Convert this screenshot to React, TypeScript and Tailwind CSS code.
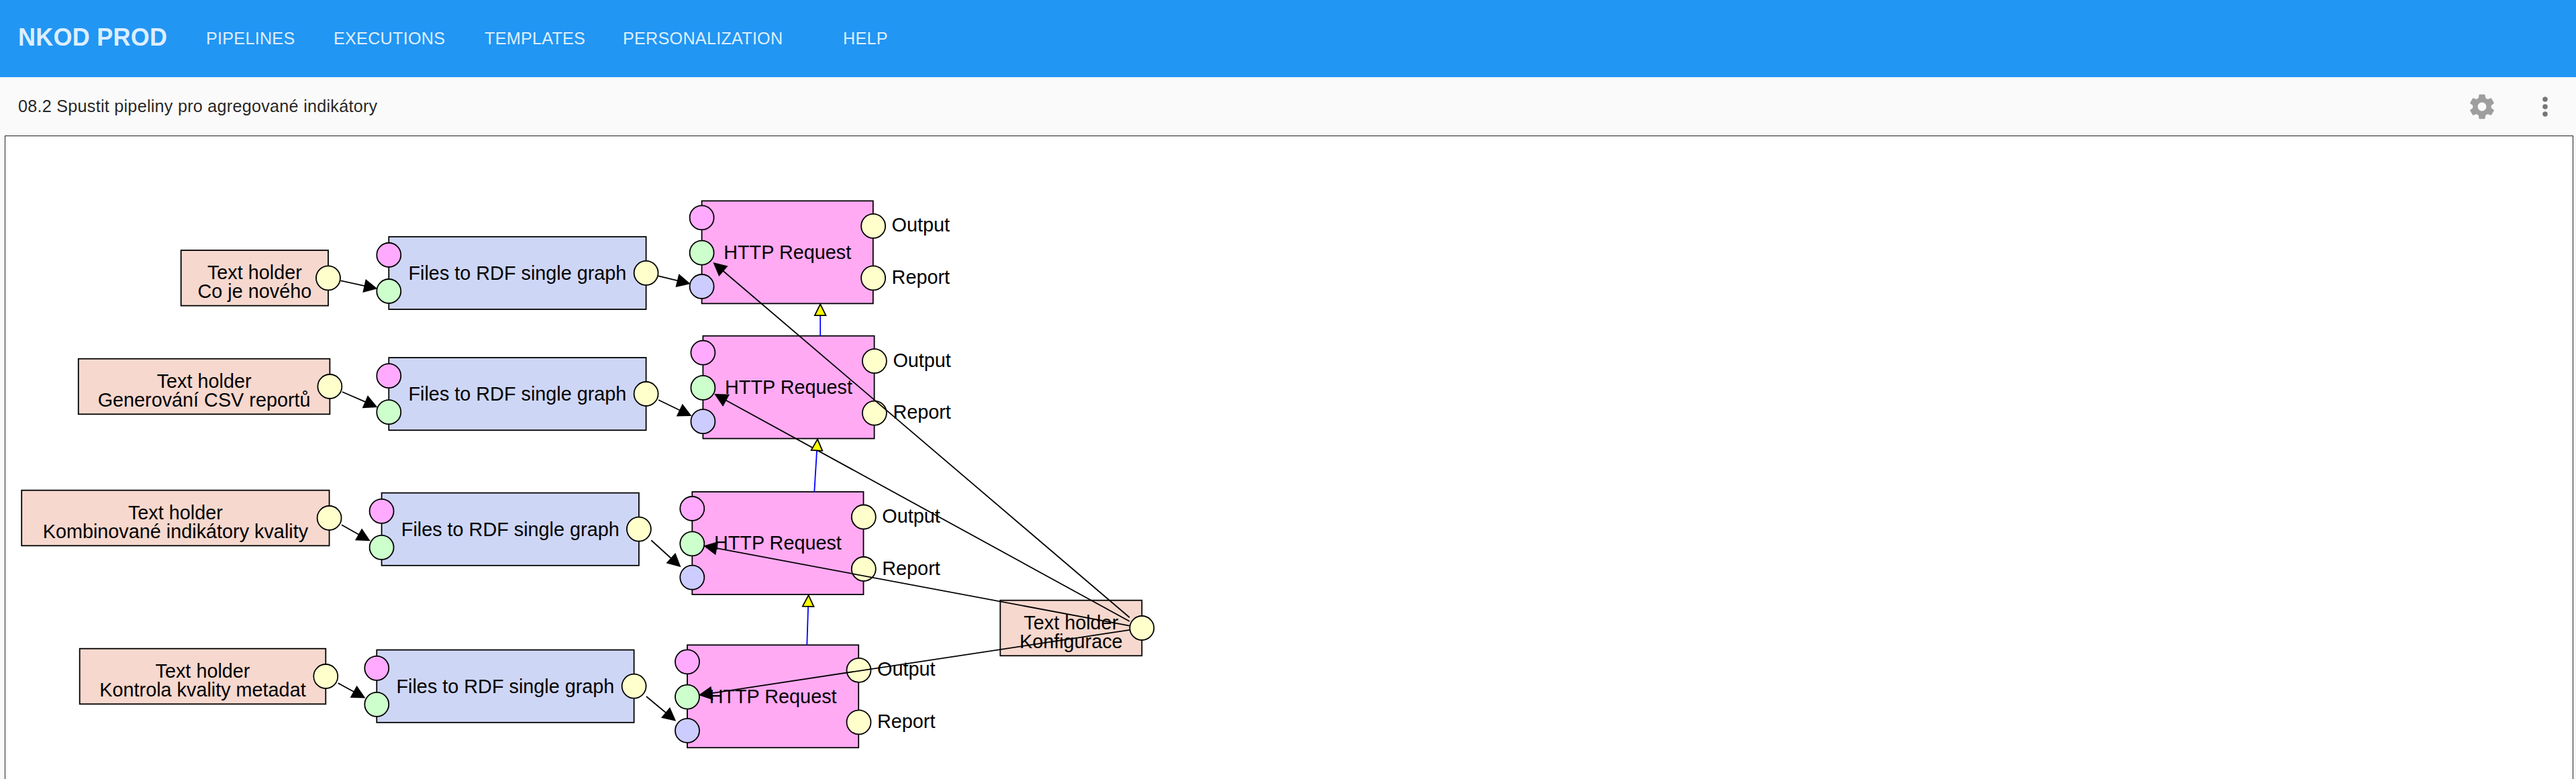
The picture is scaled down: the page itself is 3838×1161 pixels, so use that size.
type Point = { x: number; y: number };

const TEXT_HOLDERS = [
  { x: 269.7, y: 373, w: 219.3, label: "Co je nového" },
  { x: 116.8, y: 534.7, w: 374.6, label: "Generování CSV reportů" },
  { x: 32.2, y: 730.7, w: 458.4, label: "Kombinované indikátory kvality" },
  { x: 118.7, y: 966.7, w: 366.6, label: "Kontrola kvality metadat" },
  { x: 1490.3, y: 894.7, w: 211, label: "Konfigurace" },
];

const FILES_TO_RDF = [
  { x: 579.3, y: 352.8 },
  { x: 579.3, y: 533 },
  { x: 568.6, y: 734.6 },
  { x: 561.3, y: 968.6 },
];

const HTTP_REQUESTS = [
  { x: 1045.6, y: 299.4 },
  { x: 1047.4, y: 500.6 },
  { x: 1031.3, y: 733 },
  { x: 1024, y: 961.3 },
];

const FILES_WIDTH = 383.3;
const HTTP_WIDTH = 255.2;
const STROKE = 1.8;

const holderOut = (i: number): Point => ({
  x: TEXT_HOLDERS[i].x + TEXT_HOLDERS[i].w,
  y: TEXT_HOLDERS[i].y + 41.3,
});
const filesIn = (i: number): Point => ({ x: FILES_TO_RDF[i].x, y: FILES_TO_RDF[i].y + 81.2 });
const filesOut = (i: number): Point => ({ x: FILES_TO_RDF[i].x + FILES_WIDTH, y: FILES_TO_RDF[i].y + 54 });
const httpIn = (i: number, dy: number): Point => ({ x: HTTP_REQUESTS[i].x, y: HTTP_REQUESTS[i].y + dy });

const ROWS = [0, 1, 2, 3];

const DATA_LINKS: [Point, Point][] = [
  ...ROWS.map((i): [Point, Point] => [holderOut(i), filesIn(i)]),
  ...ROWS.map((i): [Point, Point] => [filesOut(i), httpIn(i, 127.6)]),
  ...ROWS.map((i): [Point, Point] => [holderOut(4), httpIn(i, 77.3)]),
];

const RUN_AFTER_LINKS: [Point, Point][] = [
  [{ x: 1222.2, y: 500.6 }, { x: 1222.2, y: 452.4 }],
  [{ x: 1213.3, y: 733 }, { x: 1218.1, y: 653.6 }],
  [{ x: 1202.3, y: 961.3 }, { x: 1204.7, y: 886 }],
];

// Triangle whose tip is at `tip` and which points along the unit vector (ux, uy).
function triangle(tip: Point, ux: number, uy: number, length: number, half: number) {
  const bx = tip.x - ux * length;
  const by = tip.y - uy * length;
  return `${tip.x},${tip.y} ${bx - uy * half},${by + ux * half} ${bx + uy * half},${by - ux * half}`;
}

function Port({ x, y, fill }: Point & { fill: string }) {
  return <circle cx={x} cy={y} r={18} fill={fill} stroke="#000" strokeWidth={STROKE} />;
}

function Box({ x, y, w, h, fill }: Point & { w: number; h: number; fill: string }) {
  return <rect x={x} y={y} width={w} height={h} fill={fill} stroke="#000" strokeWidth={STROKE} />;
}

function TextHolder({ x, y, w, label }: Point & { w: number; label: string }) {
  return (
    <g>
      <Box x={x} y={y} w={w} h={82.6} fill="#f6d8ce" />
      <text x={x + w / 2} y={y + 43} textAnchor="middle">Text holder</text>
      <text x={x + w / 2} y={y + 71.2} textAnchor="middle">{label}</text>
      <Port x={x + w} y={y + 41.3} fill="#ffffcc" />
    </g>
  );
}

function FilesToRdf({ x, y }: Point) {
  return (
    <g>
      <Box x={x} y={y} w={FILES_WIDTH} h={108.2} fill="#ced6f6" />
      <text x={x + FILES_WIDTH / 2} y={y + 64} textAnchor="middle">Files to RDF single graph</text>
      <Port x={x} y={y + 27.2} fill="#ffaaff" />
      <Port x={x} y={y + 81.2} fill="#ccffcc" />
      <Port x={x + FILES_WIDTH} y={y + 54} fill="#ffffcc" />
    </g>
  );
}

function HttpRequest({ x, y }: Point) {
  const right = x + HTTP_WIDTH;
  return (
    <g>
      <Box x={x} y={y} w={HTTP_WIDTH} h={153} fill="#ffaaf3" />
      <text x={x + HTTP_WIDTH / 2} y={y + 86.4} textAnchor="middle">HTTP Request</text>
      <Port x={x} y={y + 25} fill="#ffaaff" />
      <Port x={x} y={y + 77.3} fill="#ccffcc" />
      <Port x={x} y={y + 127.6} fill="#ccccff" />
      <Port x={right + 0.3} y={y + 37.5} fill="#ffffcc" />
      <Port x={right + 0.3} y={y + 115} fill="#ffffcc" />
      <text x={right + 27.8} y={y + 45.9}>Output</text>
      <text x={right + 27.8} y={y + 123.7}>Report</text>
    </g>
  );
}

function DataLink({ from, to }: { from: Point; to: Point }) {
  const dx = to.x - from.x;
  const dy = to.y - from.y;
  const len = Math.hypot(dx, dy);
  const ux = dx / len;
  const uy = dy / len;
  // Both ends stop at the square around a port.
  const reach = Math.max(Math.abs(ux), Math.abs(uy));
  const start = { x: from.x + (ux / reach) * 18.4, y: from.y + (uy / reach) * 18.4 };
  const tip = { x: to.x - (ux / reach) * 16.8, y: to.y - (uy / reach) * 16.8 };
  return (
    <g>
      <line x1={start.x} y1={start.y} x2={tip.x - ux * 15} y2={tip.y - uy * 15} stroke="#000" strokeWidth={STROKE} />
      <polygon points={triangle(tip, ux, uy, 20.4, 10.3)} fill="#000" />
    </g>
  );
}

function RunAfterLink({ from, to }: { from: Point; to: Point }) {
  const dx = to.x - from.x;
  const dy = to.y - from.y;
  const len = Math.hypot(dx, dy);
  const ux = dx / len;
  const uy = dy / len;
  const tip = { x: to.x - ux * 1, y: to.y - uy * 1 };
  return (
    <g>
      <line x1={from.x} y1={from.y} x2={tip.x - ux * 14} y2={tip.y - uy * 14} stroke="#00f" strokeWidth={STROKE} />
      <polygon points={triangle(tip, ux, uy, 16.8, 8.3)} fill="#ff0" stroke="#000" strokeWidth={STROKE} />
    </g>
  );
}

function Header() {
  return (
    <header className="flex h-[115px] shrink-0 items-center bg-[#2196f3] pl-[27px] text-[25.2px] tracking-[0.25px] text-white/87">
      <h1 className="w-[280px] pb-[4px] text-[36px] leading-none font-bold">NKOD PROD</h1>
      <nav className="flex whitespace-nowrap">
        <a className="w-[190px]">PIPELINES</a>
        <a className="w-[225px]">EXECUTIONS</a>
        <a className="w-[206px]">TEMPLATES</a>
        <a className="w-[328px]">PERSONALIZATION</a>
        <a>HELP</a>
      </nav>
    </header>
  );
}

function Toolbar() {
  return (
    <div className="flex h-[87px] shrink-0 items-center justify-between pr-[24px] pl-[27px]">
      <h2 className="text-[25.2px] tracking-[0.25px] text-black/87">08.2 Spustit pipeliny pro agregované indikátory</h2>
      <div className="flex items-center gap-[50px]">
        <svg className="size-[44px]" viewBox="0 0 24 24" fill="#9e9e9e">
          <path d="M19.43 12.98c.04-.32.07-.64.07-.98s-.03-.66-.07-.98l2.11-1.65c.19-.15.24-.42.12-.64l-2-3.46c-.12-.22-.39-.3-.61-.22l-2.49 1c-.52-.4-1.08-.73-1.69-.98l-.38-2.65C14.46 2.18 14.25 2 14 2h-4c-.25 0-.46.18-.49.42l-.38 2.65c-.61.25-1.17.59-1.69.98l-2.49-1c-.23-.09-.49 0-.61.22l-2 3.46c-.13.22-.07.49.12.64l2.11 1.65c-.04.32-.07.65-.07.98s.03.66.07.98l-2.11 1.65c-.19.15-.24.42-.12.64l2 3.46c.12.22.39.3.61.22l2.49-1c.52.4 1.08.73 1.69.98l.38 2.65c.03.24.24.42.49.42h4c.25 0 .46-.18.49-.42l.38-2.65c.61-.25 1.17-.59 1.69-.98l2.49 1c.23.09.49 0 .61-.22l2-3.46c.12-.22.07-.49-.12-.64l-2.11-1.65zM12 15.5c-1.93 0-3.5-1.57-3.5-3.5s1.57-3.5 3.5-3.5 3.5 1.57 3.5 3.5-1.57 3.5-3.5 3.5z" />
        </svg>
        <svg className="size-[44px]" viewBox="0 0 24 24" fill="#757575">
          <circle cx="12" cy="6" r="2.05" />
          <circle cx="12" cy="12" r="2.05" />
          <circle cx="12" cy="18" r="2.05" />
        </svg>
      </div>
    </div>
  );
}

export default function App() {
  return (
    <div className="flex h-[1161px] w-[3838px] flex-col overflow-hidden bg-[#fafafa] font-['Liberation_Sans',Arial,sans-serif]">
      <Header />
      <Toolbar />
      <main className="mr-[4px] ml-[7px] min-h-0 flex-1 border border-b-0 border-[#212121] bg-white">
        <svg width="3825" height="958" viewBox="8 203 3825 958" className="block text-[28.8px]" fill="#000">
          {HTTP_REQUESTS.map((node) => <HttpRequest key={node.y} {...node} />)}
          {FILES_TO_RDF.map((node) => <FilesToRdf key={node.y} {...node} />)}
          {TEXT_HOLDERS.map((node) => <TextHolder key={node.label} {...node} />)}
          {DATA_LINKS.map(([from, to], i) => <DataLink key={i} from={from} to={to} />)}
          {RUN_AFTER_LINKS.map(([from, to], i) => <RunAfterLink key={i} from={from} to={to} />)}
        </svg>
      </main>
    </div>
  );
}
